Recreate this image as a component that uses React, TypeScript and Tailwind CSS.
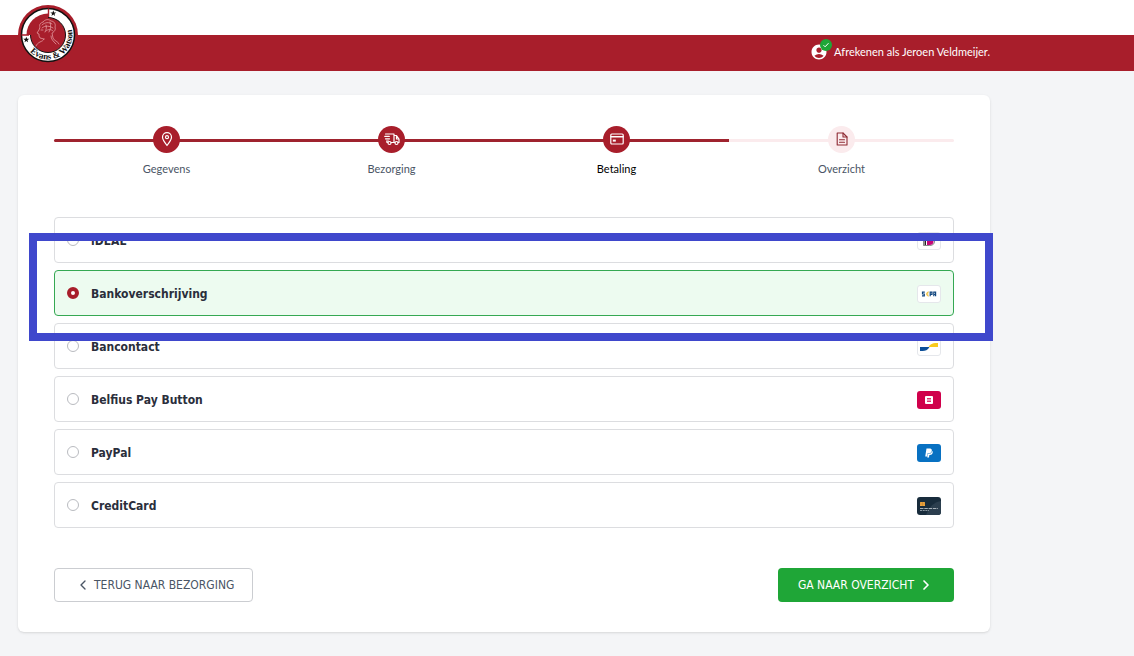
import React, { useState } from 'react';
import { ChevronLeft, ChevronRight } from 'lucide-react';
import { FaPaypal } from 'react-icons/fa';
import { MdAccountCircle } from 'react-icons/md';

interface Step {
  label: string;
  icon: React.ReactNode;
  state: 'done' | 'current' | 'upcoming';
}

interface PaymentMethod {
  id: string;
  name: string;
  logo: React.ReactNode;
}

const iconProps = {
  viewBox: '0 0 16 16',
  fill: 'none',
  stroke: 'currentColor',
  strokeLinecap: 'round' as const,
  strokeLinejoin: 'round' as const,
};

const PinIcon = () => (
  <svg className="size-4" strokeWidth="1.2" {...iconProps}>
    <path d="M8 14.5C6.2 11.8 3.5 9 3.5 6.2a4.5 4.5 0 0 1 9 0C12.5 9 9.8 11.8 8 14.5Z" />
    <circle cx="8" cy="6.2" r="1.5" />
  </svg>
);

const TruckIcon = () => (
  <svg className="size-4" strokeWidth="1.2" {...iconProps}>
    <path d="M1.5 3h8.5v8.5H7.2M3.5 11.5H3V10.5M10 4.5h2.5L15 8v3.5h-.8M10.8 11.5H10M12.5 5v3H15" />
    <path d="M.8 5.4h4.500M1.5 7.8h4M2.5 10h2" />
    <circle cx="5.5" cy="12" r="1.5" />
    <circle cx="12.5" cy="12" r="1.5" />
  </svg>
);

const CardIcon = () => (
  <svg className="size-4" strokeWidth="1.2" {...iconProps}>
    <rect x="1.8" y="3" width="12.4" height="10" rx="1" />
    <path d="M2 5.8h12" strokeWidth="1.6" />
    <rect x="3.8" y="8.6" width="3" height="2" fill="currentColor" stroke="none" />
  </svg>
);

const DocumentIcon = () => (
  <svg className="size-4" strokeWidth="1.1" {...iconProps}>
    <path d="M3.2 2h5.8l4 4v8H3.200Z" />
    <path d="M9 2v4h4M5.5 8.8h5M5.5 11.2h5" />
  </svg>
);

const Star: React.FC<{ x: number; y: number }> = ({ x, y }) => (
  <path
    transform={`translate(${x} ${y})`}
    d="M0-3 .8-.9 3-.9 1.2.5 1.8 2.6 0 1.3-1.8 2.6-1.2.5-3-.9-.8-.9Z"
    fill="#111"
  />
);

const Logo = () => (
  <svg className="size-[60px]" viewBox="0 0 60 60" role="img" aria-label="Evans & Watson">
    <circle cx="30" cy="30" r="30" fill="#a81e2b" />
    <circle cx="30" cy="30" r="26.5" fill="#fff" stroke="#111" strokeWidth="1.5" />
    <circle cx="30" cy="30" r="17.5" fill="#a81e2b" stroke="#111" strokeWidth="1" />
    <path d="M8.5 30A21.5 21.5 0 0 1 30 8.5V30Z" fill="#a81e2b" />
    <path d="M3.5 30H11M30.5 3.5V12" stroke="#a81e2b" strokeWidth="1.4" />
    <Star x={35.3} y={8.3} />
    <Star x={8.3} y={34.7} />
    <g fill="none" stroke="#e9a9ae" strokeWidth=".7" strokeLinecap="round">
      <path d="M25 17c2-3 6-3 8-1 3 0 5 3 4 6 1 3-1 5-3 6l1 5c1 3 5 3 6 6M25 17c-3 1-4 3-3 5l-1 3-2 3 2 1v2l1 2 4 1M26 34c-1 2-2 2-4 3-2 1-3 2-4 4M33 31c0 3 2 5 5 8" />
      <path d="M24 20c3-3 7-3 10-1M24 23c3-3 8-2 11 0M28 26c2-2 5-2 7 0M28 20c1 3 0 5-1 7M32 17c1 4 1 7-1 10M23 25h2" />
    </g>
    <path id="logo-ring" d="M5.500 30A24.500 24.500 0 0 0 54.500 30A24.500 24.500 0 0 0 30 5.500" fill="none" />
    <text fill="#111" fontSize="9" fontWeight="700" fontFamily="Liberation Serif, serif">
      <textPath href="#logo-ring" startOffset="18">Evans &amp; Watson</textPath>
    </text>
  </svg>
);

const LogoBox: React.FC<{ className: string; children: React.ReactNode }> = ({ className, children }) => (
  <span className={`flex h-[18px] w-6 shrink-0 items-center justify-center overflow-hidden rounded-[3px] ${className}`}>
    {children}
  </span>
);

const steps: Step[] = [
  { label: 'Gegevens', icon: <PinIcon />, state: 'done' },
  { label: 'Bezorging', icon: <TruckIcon />, state: 'done' },
  { label: 'Betaling', icon: <CardIcon />, state: 'current' },
  { label: 'Overzicht', icon: <DocumentIcon />, state: 'upcoming' },
];

const methods: PaymentMethod[] = [
  {
    id: 'ideal',
    name: 'iDEAL',
    logo: (
      <LogoBox className="border border-gray-200 bg-white">
        <svg className="h-3 w-3.5" viewBox="0 0 14 12">
          <path d="M1.5 1h6c3.5 0 5 2 5 5s-1.5 4.5-5 4.500h-6Z" fill="#fff" stroke="#555" strokeWidth=".7" />
          <path d="M5 2h2.5c3 0 4 1.5 4 4s-1 4-4 4H5Z" fill="#c4077a" />
          <path d="M2.5 6h1.5v4H2.500Z" fill="#222" />
        </svg>
      </LogoBox>
    ),
  },
  {
    id: 'sepa',
    name: 'Bankoverschrijving',
    logo: (
      <LogoBox className="border border-gray-200 bg-white">
        <svg className="h-2 w-4" viewBox="0 0 16 8">
          <g fill="none" stroke="#12477f" strokeWidth="1.2">
            <path d="M3.8 2.2H1.5V4H3.3V5.8H1M9.2 6.3V2.2h1.8V4.400H9.200M12.800 6.300V2.200h1.800v4.100M12.800 4.500h1.800" />
            <path d="M7.8 2.2C5.3 1.5 5.3 6.5 7.8 5.8M5 4h2.5" stroke="#f0c44c" />
          </g>
        </svg>
      </LogoBox>
    ),
  },
  {
    id: 'bancontact',
    name: 'Bancontact',
    logo: (
      <LogoBox className="border border-gray-200 bg-white">
        <svg className="h-2 w-[18px]" viewBox="0 0 18 8">
          <path d="M0 4h9.5C7.5 7 5.5 8 2.5 8H0Z" fill="#0c4f98" />
          <path d="M18 0v4H8.5C10.500 1 12.500 0 15.500 0Z" fill="#f9cb1e" />
        </svg>
      </LogoBox>
    ),
  },
  {
    id: 'belfius',
    name: 'Belfius Pay Button',
    logo: (
      <LogoBox className="bg-[#d0004b]">
        <svg className="size-2" viewBox="0 0 8 8">
          <rect width="8" height="8" rx="1" fill="#fff" />
          <path d="M2 2.5h4M2 4h4M2 5.5h4" stroke="#d0004b" strokeWidth=".8" />
        </svg>
      </LogoBox>
    ),
  },
  {
    id: 'paypal',
    name: 'PayPal',
    logo: (
      <LogoBox className="bg-[#0871c2]">
        <FaPaypal className="size-2.5 text-white" />
      </LogoBox>
    ),
  },
  {
    id: 'creditcard',
    name: 'CreditCard',
    logo: (
      <LogoBox className="bg-[#182c3c]">
        <svg className="h-[18px] w-6" viewBox="0 0 24 18">
          <path d="M9 18C12 10 17 5 24 4v14Z" fill="#2b3e4e" />
          <rect x="3" y="5" width="5" height="4" rx=".6" fill="#eba33e" />
          <path d="M3 7h5M5.5 5v4" stroke="#b97c2c" strokeWidth=".4" />
          <path d="M3 11.5h18" stroke="#b5bec5" strokeWidth=".9" strokeDasharray="3.5 .8" />
          <path d="M3 13.5h9" stroke="#94a0a9" strokeWidth=".9" strokeDasharray="2 .7" />
        </svg>
      </LogoBox>
    ),
  },
];

const stepCircle = {
  done: 'bg-[#a81e2b] text-white',
  current: 'bg-[#a81e2b] text-white',
  upcoming: 'bg-[#fbebed] text-[#8f2a33]',
};

const stepLabel = {
  done: 'text-gray-600',
  current: 'text-black',
  upcoming: 'text-gray-600',
};

const Header = () => (
  <header className="bg-white pt-[35px]">
    <div className="h-9 bg-[#a81e2b]">
      <div className="mx-[18px] flex max-w-[972px] items-start justify-between">
        <a href="#home" className="-mt-[30px]">
          <Logo />
        </a>
        <div className="flex h-[34px] items-center gap-1.5 font-[Lato,sans-serif] text-[11px] text-white">
          <span className="relative">
            <MdAccountCircle className="size-[18px]" />
            <span className="absolute -top-1 -right-1 flex size-3 items-center justify-center rounded-full bg-[#1fa637]">
              <svg className="size-2" viewBox="0 0 8 8" fill="none" stroke="currentColor">
                <path d="m1.5 4.2 1.6 1.6 3.4-3.600" />
              </svg>
            </span>
          </span>
          Afrekenen als Jeroen Veldmeijer.
        </div>
      </div>
    </div>
  </header>
);

const Stepper = () => (
  <div className="relative">
    <div className="absolute inset-x-0 top-[13px] h-[3px] rounded-full bg-[#fbebed]">
      <div className="h-full w-3/4 rounded-l-full bg-[#9f232e]"></div>
    </div>
    <ol className="relative grid grid-cols-4">
      {steps.map((step) => (
        <li key={step.label} className="flex flex-col items-center gap-2">
          <span className={`flex size-[27px] items-center justify-center rounded-full pb-0.5 ${stepCircle[step.state]}`}>
            {step.icon}
          </span>
          <span className={`font-[Lato,sans-serif] text-[11px] leading-4 ${stepLabel[step.state]}`}>{step.label}</span>
        </li>
      ))}
    </ol>
  </div>
);

const App: React.FC = () => {
  const [selected, setSelected] = useState('sepa');

  return (
    <div className="min-h-screen bg-[#f4f5f7] font-['DejaVu_Sans_Condensed','DejaVu_Sans',sans-serif]">
      <Header />

      <main className="mx-[18px] mt-6 max-w-[972px] rounded-md bg-white px-9 pt-[31px] pb-[30px] shadow-sm">
        <Stepper />

        {/* Payment methods */}
        <fieldset aria-label="Betaling" className="relative mt-10 flex flex-col gap-[7px]">
          {methods.map((method) => (
            <label
              key={method.id}
              className={`flex h-[46px] cursor-pointer items-center rounded border px-3 pt-0.5 ${
                selected === method.id ? 'border-[#35a853] bg-[#edfbf0]' : 'border-[#dcdde0] bg-white'
              }`}
            >
              <input
                type="radio"
                name="payment"
                value={method.id}
                checked={selected === method.id}
                onChange={() => setSelected(method.id)}
                className="mb-0.5 size-3 appearance-none rounded-full border border-[#b9bbc0] bg-white checked:border-4 checked:border-[#a81e2b]"
              />
              <span className="ml-3 flex-1 text-[12px] leading-4 font-bold text-[#2a2e3b]">{method.name}</span>
              {method.logo}
            </label>
          ))}
          <div className="pointer-events-none absolute top-4 -right-[39px] -left-[25px] h-[108px] border-8 border-[#3f48cc]"></div>
        </fieldset>

        {/* Navigation */}
        <div className="mt-10 flex items-center justify-between">
          <button
            type="button"
            className="flex h-[34px] items-center gap-[3px] rounded border border-[#cbcdd1] bg-white pr-[18px] pl-5 text-[12px] text-gray-600"
          >
            <ChevronLeft className="size-4" strokeWidth={2} />
            TERUG NAAR BEZORGING
          </button>
          <button
            type="button"
            className="flex h-[34px] items-center gap-1 rounded bg-[#1fa637] px-5 text-[12px] text-white"
          >
            GA NAAR OVERZICHT
            <ChevronRight className="size-4" strokeWidth={2.5} />
          </button>
        </div>
      </main>
    </div>
  );
};

export default App;
